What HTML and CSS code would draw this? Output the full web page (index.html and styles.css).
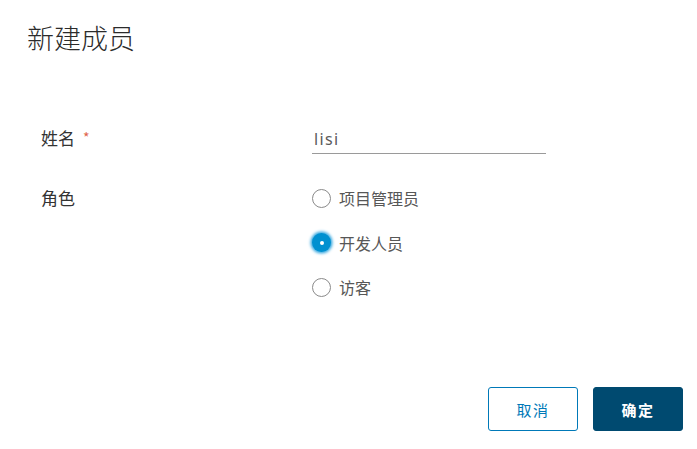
FILE: index.html
```html
<!DOCTYPE html>
<html lang="zh">
<head>
<meta charset="utf-8">
<link rel="stylesheet" href="styles.css">
</head>
<body>
<div class="modal">
  <h1 class="title">新建成员</h1>
  <form class="form">
    <div class="row">
      <label class="label">姓名<span class="req">*</span></label>
      <div class="control">
        <input class="input" type="text" value="lisi">
      </div>
    </div>
    <div class="row row-radio">
      <label class="label">角色</label>
      <div class="radios">
        <label class="radio"><span class="dot"></span>项目管理员</label>
        <label class="radio checked"><span class="dot"></span>开发人员</label>
        <label class="radio"><span class="dot"></span>访客</label>
      </div>
    </div>
  </form>
  <div class="footer">
    <button class="btn btn-outline" type="button">取消</button>
    <button class="btn btn-primary" type="button">确定</button>
  </div>
</div>
</body>
</html>
```
FILE: styles.css
```css
html, body {
  margin: 0;
  padding: 0;
  background: #fff;
}
body {
  width: 697px;
  height: 449px;
  overflow: hidden;
  font-family: "Noto Sans CJK SC", "Noto Sans", sans-serif;
  color: #333;
}
.modal {
  padding: 20px 14px 0 0;
  display: flex;
  flex-direction: column;
}
.title {
  margin: 0 0 0 27px;
  font-size: 27px;
  line-height: 36px;
  font-weight: 300;
  color: #2b2b2b;
}
.form {
  margin: 68px 0 0 41px;
  display: flex;
  flex-direction: column;
  gap: 24px;
}
.row {
  display: grid;
  grid-template-columns: 271px 234px;
  align-items: start;
}
.label {
  font-size: 17px;
  line-height: 26px;
  color: #333;
}
.row-radio .label {
  line-height: 40px;
}
.req {
  color: #e0634a;
  font-size: 14px;
  margin-left: 8px;
  vertical-align: 2px;
}
.input {
  box-sizing: border-box;
  width: 234px;
  height: 30px;
  border: 0;
  border-bottom: 1px solid #9a9a9a;
  padding: 0 0 0 2px;
  margin: 0;
  font-family: "Noto Sans", sans-serif;
  font-size: 16px;
  letter-spacing: 1.4px;
  color: #5a5a5a;
  outline: none;
  background: transparent;
}
.radios {
  display: flex;
  flex-direction: column;
  gap: 4.5px;
}
.radio {
  display: flex;
  align-items: center;
  height: 40px;
  font-size: 16px;
  color: #575757;
}
.dot {
  box-sizing: border-box;
  width: 19px;
  height: 19px;
  border-radius: 50%;
  border: 1px solid #8a8a8a;
  margin: 0 8px 0 0;
  position: relative;
  flex: none;
}
.checked .dot {
  border: 0;
  background: #0090d0;
  box-shadow: 0 0 3px 1.5px #3aa9e0;
}
.checked .dot::after {
  content: "";
  position: absolute;
  left: 7.5px;
  top: 7.5px;
  width: 4px;
  height: 4px;
  border-radius: 50%;
  background: #fff;
}
.footer {
  margin-top: 80px;
  display: flex;
  justify-content: flex-end;
  gap: 15px;
}
.btn {
  box-sizing: border-box;
  width: 90px;
  height: 44px;
  border-radius: 3px;
  font-family: "Noto Sans CJK SC", sans-serif;
  font-size: 15px;
  letter-spacing: 1.5px;
  padding: 0;
  cursor: pointer;
}
.btn-outline {
  background: #fff;
  border: 1px solid #0079b8;
  color: #0079b8;
  font-weight: 400;
}
.btn-primary {
  background: #004a70;
  border: 1px solid #004a70;
  color: #fff;
  font-weight: 700;
}
```
